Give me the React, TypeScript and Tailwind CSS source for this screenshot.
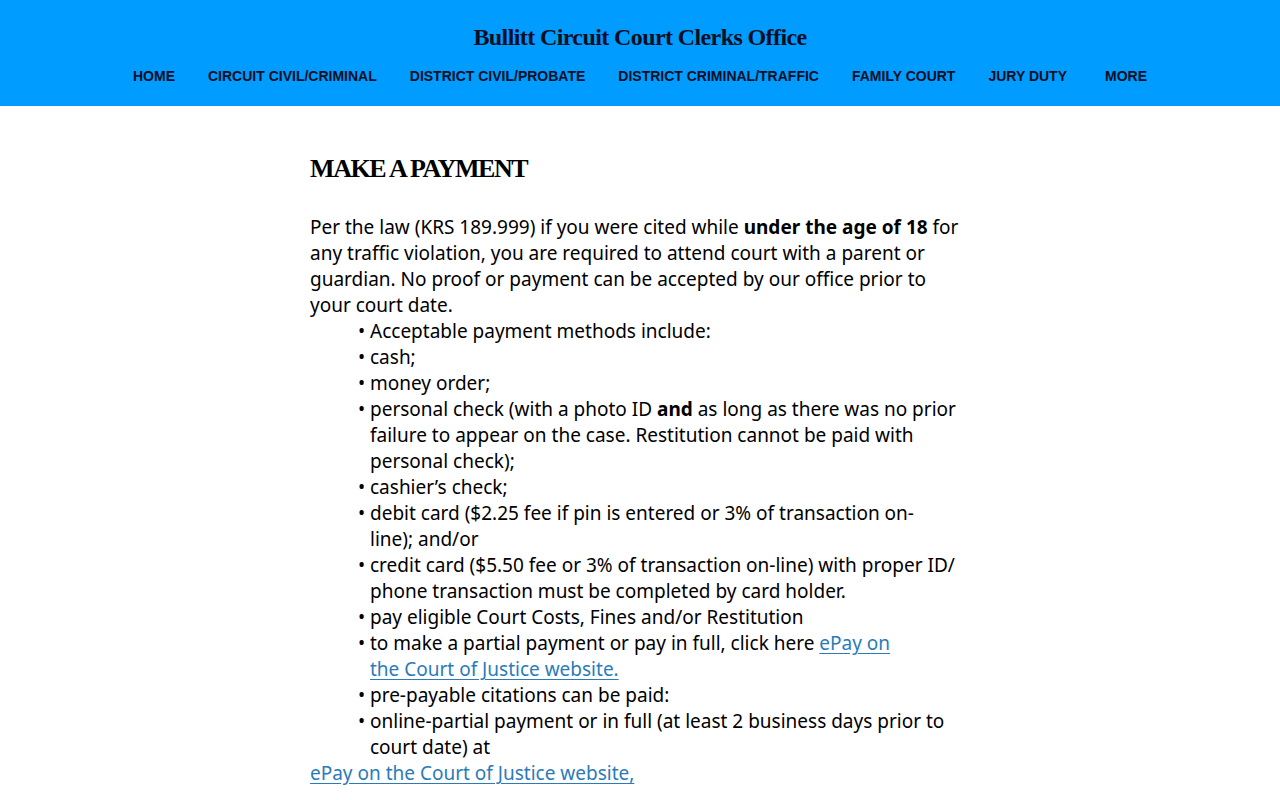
import React from "react";

const navItems = [
  "HOME",
  "CIRCUIT CIVIL/CRIMINAL",
  "DISTRICT CIVIL/PROBATE",
  "DISTRICT CRIMINAL/TRAFFIC",
  "FAMILY COURT",
  "JURY DUTY",
];

const Link: React.FC<{ children: React.ReactNode }> = ({ children }) => (
  <a href="#" className="text-[#2b7bb9] underline underline-offset-[3px]">
    {children}
  </a>
);

const Bullet: React.FC<{ children: React.ReactNode }> = ({ children }) => (
  <li className="flex">
    <span className="w-[12px] shrink-0">•</span>
    <span>{children}</span>
  </li>
);

const App: React.FC = () => {
  return (
    <div className="min-h-screen bg-white">
      <header className="h-[106px] bg-[#009cff] flex flex-col items-center">
        <h1
          className="mt-[21px] text-[24px] leading-[32px] font-bold text-[#0a0f24] tracking-[-0.6px]"
          style={{ fontFamily: '"Liberation Serif", "Times New Roman", serif' }}
        >
          Bullitt Circuit Court Clerks Office
        </h1>
        <nav
          className="mt-[15px] flex items-center gap-[33px] text-[14px] font-bold text-[#0a0f24]"
          style={{ fontFamily: '"Liberation Sans", Arial, sans-serif' }}
        >
          {navItems.map((item) => (
            <a key={item} href="#" className="leading-[16px]">
              {item}
            </a>
          ))}
          <a href="#" className="leading-[16px] ml-[5px]">
            MORE
          </a>
        </nav>
      </header>

      <main
        className="w-[660px] ml-[310px] pt-[47px] text-[19px] leading-[26px] text-black"
        style={{ fontFamily: '"Noto Sans", "Open Sans", sans-serif' }}
      >
        <h2
          className="text-[26px] leading-[32px] font-bold tracking-[-1.4px] mb-[29px]"
          style={{ fontFamily: '"Liberation Serif", "Times New Roman", serif' }}
        >
          MAKE A PAYMENT
        </h2>
        <p>
          Per the law (KRS 189.999) if you were cited while{" "}
          <strong>under the age of 18</strong> for any traffic violation, you are
          required to attend court with a parent or guardian. No proof or payment
          can be accepted by our office prior to your court date.
        </p>
        <ul className="pl-[48px]">
          <Bullet>Acceptable payment methods include:</Bullet>
          <Bullet>cash;</Bullet>
          <Bullet>money order;</Bullet>
          <Bullet>
            personal check (with a photo ID <strong>and</strong> as long as there
            was no prior failure to appear on the case. Restitution cannot be paid
            with personal check);
          </Bullet>
          <Bullet>cashier’s check;</Bullet>
          <Bullet>
            debit card ($2.25 fee if pin is entered or 3% of transaction on-
            <br />
            line); and/or
          </Bullet>
          <Bullet>
            credit card ($5.50 fee or 3% of transaction on-line) with proper ID/
            phone transaction must be completed by card holder.
          </Bullet>
          <Bullet>pay eligible Court Costs, Fines and/or Restitution</Bullet>
          <Bullet>
            to make a partial payment or pay in full, click here{" "}
            <Link>
              ePay on
              <br />
              the Court of Justice website.
            </Link>
          </Bullet>
          <Bullet>pre-payable citations can be paid:</Bullet>
          <Bullet>
            online-partial payment or in full (at least 2 business days prior to
            court date) at
          </Bullet>
        </ul>
        <p>
          <Link>ePay on the Court of Justice website,</Link>
        </p>
      </main>
    </div>
  );
};

export default App;
